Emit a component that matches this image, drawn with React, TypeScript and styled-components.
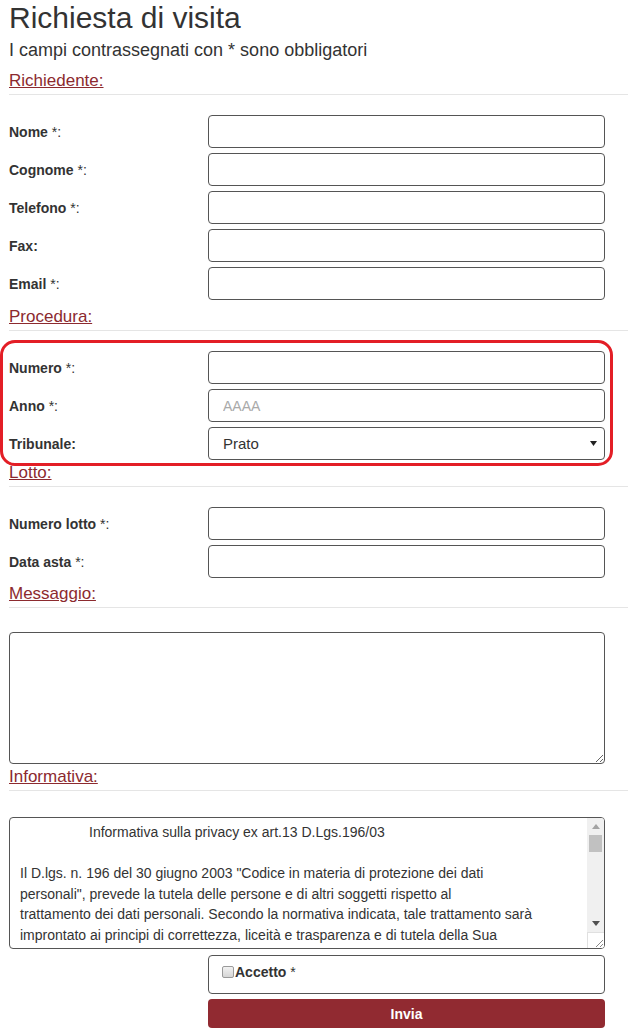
import React from 'react';
import styled, {createGlobalStyle} from "styled-components";

const GlobalStyle = createGlobalStyle`
    body {
        margin: 0;
        background: #fff;
        color: #333;
        font-family: "Liberation Sans", Arial, sans-serif;
        font-size: 14px;
    }
    * {
        box-sizing: border-box;
    }
`

type FieldType = {
    label: string,
    required?: boolean,
    placeholder?: string
}

const richiedente: FieldType[] = [
    {label: "Nome", required: true},
    {label: "Cognome", required: true},
    {label: "Telefono", required: true},
    {label: "Fax"},
    {label: "Email", required: true},
]

const lotto: FieldType[] = [
    {label: "Numero lotto", required: true},
    {label: "Data asta", required: true},
]

const privacyLines = [
    "Informativa sulla privacy ex art.13 D.Lgs.196/03",
    "",
    "Il D.lgs. n. 196 del 30 giugno 2003 \"Codice in materia di protezione dei dati",
    "personali\", prevede la tutela delle persone e di altri soggetti rispetto al",
    "trattamento dei dati personali. Secondo la normativa indicata, tale trattamento sarà",
    "improntato ai principi di correttezza, liceità e trasparenza e di tutela della Sua",
]

const Field = (props: FieldType) => {
    return (
        <Row>
            <Label>
                {props.label}
                {props.required ? <Star> *:</Star> : ":"}
            </Label>
            <Input placeholder={props.placeholder}/>
        </Row>
    );
};

const Section = (props: { title: string, space: number }) => {
    return (
        <SectionHeader $space={props.space}>
            <SectionLink>{props.title}</SectionLink>
        </SectionHeader>
    );
};

export default function App() {
    return (
        <Page>
            <GlobalStyle/>
            <Title>Richiesta di visita</Title>
            <Subtitle>I campi contrassegnati con * sono obbligatori</Subtitle>

            <Section title="Richiedente:" space={11}/>
            <Fields>
                {richiedente.map(f => <Field key={f.label} {...f}/>)}
            </Fields>

            <Section title="Procedura:" space={7}/>
            <Fields $highlight>
                <Field label="Numero" required/>
                <Field label="Anno" required placeholder="AAAA"/>
                <Row>
                    <Label>Tribunale:</Label>
                    <SelectWrap>
                        <Select defaultValue="Prato">
                            <option>Prato</option>
                            <option>Firenze</option>
                            <option>Pistoia</option>
                        </Select>
                        <SelectArrow width="7" height="5" viewBox="0 0 7 5">
                            <path d="M0 0h7L3.5 5z" fill="#222"/>
                        </SelectArrow>
                    </SelectWrap>
                </Row>
            </Fields>

            <Section title="Lotto:" space={3}/>
            <Fields>
                {lotto.map(f => <Field key={f.label} {...f}/>)}
            </Fields>

            <Section title="Messaggio:" space={6}/>
            <Message/>

            <Section title="Informativa:" space={3}/>
            <Privacy>
                <PrivacyText>
                    {privacyLines.map((line, i) => (
                        <PrivacyLine key={i} $indent={i === 0}>{line || "\u00a0"}</PrivacyLine>
                    ))}
                </PrivacyText>
                <Scrollbar>
                    <ScrollButton>
                        <svg width="8" height="5" viewBox="0 0 8 5"><path d="M4 0l4 5H0z" fill="#a3a3a3"/></svg>
                    </ScrollButton>
                    <Thumb/>
                    <Track/>
                    <ScrollButton>
                        <svg width="8" height="5" viewBox="0 0 8 5"><path d="M0 0h8L4 5z" fill="#505050"/></svg>
                    </ScrollButton>
                    <Corner>
                        <svg width="8" height="8" viewBox="0 0 8 8">
                            <path d="M1 8L8 1M5 8L8 5" stroke="#888" strokeWidth="1"/>
                        </svg>
                    </Corner>
                </Scrollbar>
            </Privacy>

            <Accept>
                <CheckLabel>
                    <Check type="checkbox"/>
                    <strong>Accetto</strong>
                    <Star>&nbsp;*</Star>
                </CheckLabel>
            </Accept>
            <Submit>Invia</Submit>
        </Page>
    );
}

const Page = styled.div`
    padding: 0 0 6px 9px;
`

const Title = styled.h2`
    margin: 0;
    padding-top: 1px;
    font-size: 30px;
    line-height: 33px;
    font-weight: normal;
    color: #333;
`

const Subtitle = styled.p`
    margin: 6px 0 0;
    font-size: 18px;
    line-height: 20px;
`

const SectionHeader = styled.div<{ $space: number }>`
    margin-top: ${props => props.$space}px;
    padding-bottom: 3px;
    border-bottom: 1px solid #e5e5e5;
    font-size: 17px;
    line-height: 20px;
`

const SectionLink = styled.a`
    color: #8c2a2f;
    text-decoration: underline;
`

const Fields = styled.div<{ $highlight?: boolean }>`
    position: relative;
    display: flex;
    flex-direction: column;
    gap: 5px;
    margin-top: 20px;
    padding-right: 23px;

    ${props => props.$highlight && `
        &::after {
            content: "";
            position: absolute;
            top: -11px;
            left: -9px;
            right: 15px;
            bottom: -6px;
            border: 3px solid #e31e26;
            border-radius: 15px;
            pointer-events: none;
        }
    `}
`

const Row = styled.div`
    display: grid;
    grid-template-columns: 199px 1fr;
    align-items: center;
`

const Label = styled.label`
    font-weight: bold;
    font-size: 14px;
    color: #333;
`

const Star = styled.span`
    font-weight: normal;
`

const Input = styled.input`
    height: 33px;
    width: 100%;
    border: 1px solid #555;
    border-radius: 4px;
    padding: 0 14px;
    font-family: inherit;
    font-size: 14px;
    color: #333;

    &::placeholder {
        color: #a9a9a9;
    }
`

const SelectWrap = styled.div`
    position: relative;
`

const Select = styled.select`
    appearance: none;
    display: block;
    width: 100%;
    height: 33px;
    border: 1px solid #555;
    border-radius: 4px;
    padding: 0 14px;
    background: #fff;
    font-family: inherit;
    font-size: 15px;
    color: #333;
`

const SelectArrow = styled.svg`
    position: absolute;
    right: 8px;
    top: 14px;
    pointer-events: none;
`

const Message = styled.textarea`
    display: block;
    margin-top: 24px;
    width: 596px;
    height: 132px;
    border: 1px solid #555;
    border-radius: 4px;
    font-family: inherit;
    font-size: 14px;
`

const Privacy = styled.div`
    display: flex;
    margin-top: 26px;
    width: 596px;
    height: 132px;
    border: 1px solid #555;
    border-radius: 4px;
    overflow: hidden;
`

const PrivacyText = styled.div`
    flex: 1;
    padding: 4px 10px;
    overflow: hidden;
    font-size: 14px;
    line-height: 20.6px;
    color: #333;
`

const PrivacyLine = styled.div<{ $indent?: boolean }>`
    white-space: pre;
    padding-left: ${props => props.$indent ? "69px" : "0"};
`

const Scrollbar = styled.div`
    display: flex;
    flex-direction: column;
    width: 17px;
    background: #f0f0f0;
`

const ScrollButton = styled.div`
    display: flex;
    align-items: center;
    justify-content: center;
    height: 17px;
`

const Thumb = styled.div`
    height: 17px;
    margin: 0 2px;
    background: #c1c1c1;
`

const Track = styled.div`
    flex: 1;
`

const Corner = styled.div`
    display: flex;
    align-items: flex-end;
    justify-content: flex-end;
    height: 16px;
    padding: 0 1px 1px 0;
    background: #fff;
    border-top: 1px solid #e0e0e0;
    border-left: 1px solid #e0e0e0;
`

const Accept = styled.div`
    margin: 6px 0 0 199px;
    width: 397px;
    height: 39px;
    padding: 6px 13px;
    border: 1px solid #555;
    border-radius: 4px;
`

const CheckLabel = styled.label`
    display: flex;
    align-items: center;
    font-size: 14px;
    line-height: 20px;
    color: #333;
`

const Check = styled.input`
    appearance: none;
    width: 12px;
    height: 12px;
    margin: 0 1px 0 0;
    border: 1px solid #9a9a9a;
    border-radius: 2px;
    background: linear-gradient(#f2f2f2, #d6d6d6);
`

const Submit = styled.button`
    display: block;
    margin: 5px 0 0 199px;
    width: 397px;
    height: 29px;
    border: none;
    border-radius: 4px;
    background: #912a31;
    color: #fff;
    font-family: inherit;
    font-size: 14px;
    font-weight: bold;
`
